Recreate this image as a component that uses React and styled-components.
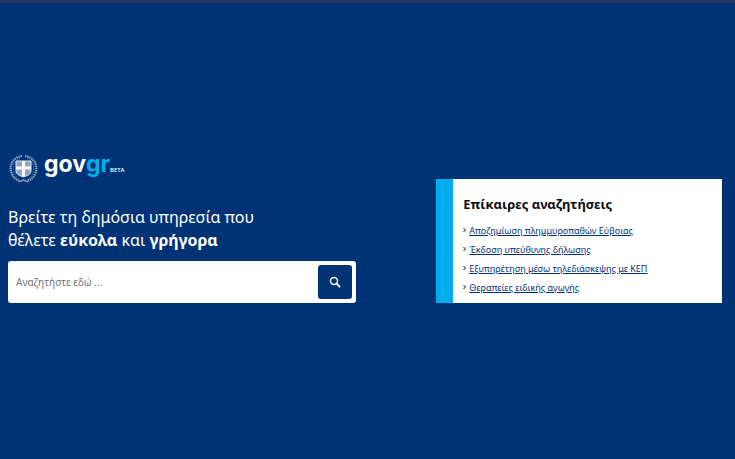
import styled, { createGlobalStyle } from 'styled-components';

const GlobalStyle = createGlobalStyle`
  * {
    box-sizing: border-box;
  }

  body {
    margin: 0;
    background: #003375;
    font-family: 'Noto Sans', 'Open Sans', sans-serif;
  }
`;

const Page = styled.div`
  display: flex;
  flex-direction: column;
  min-height: 100vh;
  border-top: 3px solid #2b3568;
`;

const Hero = styled.main`
  flex: 1;
  display: grid;
  grid-template-columns: 39fr 32fr;
  align-content: center;
  align-items: end;
  gap: 80px;
  padding: 0 13px 6px 8px;
`;

const Logo = styled.a`
  display: flex;
  align-items: center;
  gap: 5px;
  height: 30px;
  color: #fff;
  text-decoration: none;
`;

const LogoName = styled.span`
  display: flex;
  align-items: baseline;
  padding-bottom: 4px;
  font-family: Inter, sans-serif;
  font-size: 23px;
  line-height: 30px;
  font-weight: 700;
`;

const LogoAccent = styled.span`
  color: #00aeef;
`;

const Beta = styled.span`
  font-family: 'Open Sans', sans-serif;
  font-size: 6px;
  font-weight: 600;
`;

const Intro = styled.h1`
  margin: 22px 0 9px;
  color: #fff;
  font-size: 16px;
  line-height: 23px;
  font-weight: 400;
`;

const SearchForm = styled.form`
  display: flex;
  height: 42px;
  padding: 4px;
  background: #fff;
  border-radius: 3px;
`;

const SearchInput = styled.input`
  flex: 1;
  min-width: 0;
  padding: 0 4px;
  border: 0;
  background: transparent;
  font-family: inherit;
  font-size: 10px;

  &::placeholder {
    color: #6f7376;
    opacity: 1;
  }

  &:focus {
    outline: none;
  }
`;

const SearchButton = styled.button`
  display: flex;
  align-items: center;
  justify-content: center;
  width: 34px;
  padding: 0;
  border: 0;
  border-radius: 3px;
  background: #003375;
  color: #fff;
  cursor: pointer;
`;

const Card = styled.section`
  padding: 14px 10px 6px;
  border-left: 17px solid #00aeef;
  background: #fff;
`;

const CardTitle = styled.h2`
  margin: 0 0 6px;
  color: #0b0c0c;
  font-size: 13px;
  line-height: 22px;
  font-weight: 700;
`;

const LinkList = styled.ul`
  margin: 0;
  padding: 0;
  list-style: none;
`;

const LinkItem = styled.li`
  display: flex;
  align-items: center;
  gap: 2px;
  font-size: 9px;
  line-height: 19px;

  a {
    color: #003375;
    text-underline-offset: 1px;
  }
`;

const links = [
  'Αποζημίωση πλημμυροπαθών Εύβοιας',
  'Έκδοση υπεύθυνης δήλωσης',
  'Εξυπηρέτηση μέσω τηλεδιάσκεψης με ΚΕΠ',
  'Θεραπείες ειδικής αγωγής',
];

const Emblem = () => (
  <svg width='31' height='30' viewBox='0 0 31 30' fill='none' aria-hidden='true'>
    <path
      d='M14 2C6.500 3 2.500 8.500 2.700 15C3 21 6.500 25.500 12 27M17 2C24.500 3 28.500 8.500 28.300 15C28 21 24.500 25.500 19 27'
      stroke='#8ea4c5'
      strokeWidth='2.200'
      strokeDasharray='1.500 0.700'
    />
    <path
      d='M12 4.500C7.500 6 5 10.500 5.200 15C5.500 19.500 8 23.500 12 25.500M19 4.500C23.500 6 26 10.500 25.800 15C25.500 19.500 23 23.500 19 25.500'
      stroke='#5877a6'
      strokeWidth='1'
      strokeDasharray='1.400 1.200'
    />
    <path d='M11 28L15.500 26L20 28' stroke='#9fb2ce' strokeWidth='1.300' />
    <path d='M8 7H23V17C23 20 20 21.500 15.500 23C11 21.500 8 20 8 17Z' fill='#8fa5c6' />
    <path d='M15.500 7V23M8 14H23' stroke='#fff' strokeWidth='3' />
    <path d='M8 7H23V17C23 20 20 21.500 15.500 23C11 21.500 8 20 8 17Z' stroke='#e3e9f2' />
  </svg>
);

const SearchIcon = () => (
  <svg width='12' height='12' viewBox='0 0 12 12' fill='none' aria-hidden='true'>
    <circle cx='5' cy='5' r='3.500' stroke='currentColor' strokeWidth='1.400' />
    <path d='M7.600 7.600L10.500 10.500' stroke='currentColor' strokeWidth='1.900' strokeLinecap='round' />
  </svg>
);

const Chevron = () => (
  <svg width='4' height='6' viewBox='0 0 4 6' fill='none' aria-hidden='true'>
    <path d='M0.500 1L2.500 3L0.500 5' stroke='#0b0c0c' />
  </svg>
);

const App = () => {
  return (
    <Page>
      <GlobalStyle />
      <Hero>
        <div>
          <Logo href='#'>
            <Emblem />
            <LogoName>
              gov<LogoAccent>gr</LogoAccent>
              <Beta>BETA</Beta>
            </LogoName>
          </Logo>
          <Intro>
            Βρείτε τη δημόσια υπηρεσία που
            <br />
            θέλετε <strong>εύκολα</strong> και <strong>γρήγορα</strong>
          </Intro>
          <SearchForm role='search' onSubmit={(e) => e.preventDefault()}>
            <SearchInput type='search' aria-label='Αναζήτηση' placeholder='Αναζητήστε εδώ ...' />
            <SearchButton type='submit' aria-label='Αναζήτηση'>
              <SearchIcon />
            </SearchButton>
          </SearchForm>
        </div>
        <Card>
          <CardTitle>Επίκαιρες αναζητήσεις</CardTitle>
          <LinkList>
            {links.map((label) => (
              <LinkItem key={label}>
                <Chevron />
                <a href='#'>{label}</a>
              </LinkItem>
            ))}
          </LinkList>
        </Card>
      </Hero>
    </Page>
  );
};

export default App;
